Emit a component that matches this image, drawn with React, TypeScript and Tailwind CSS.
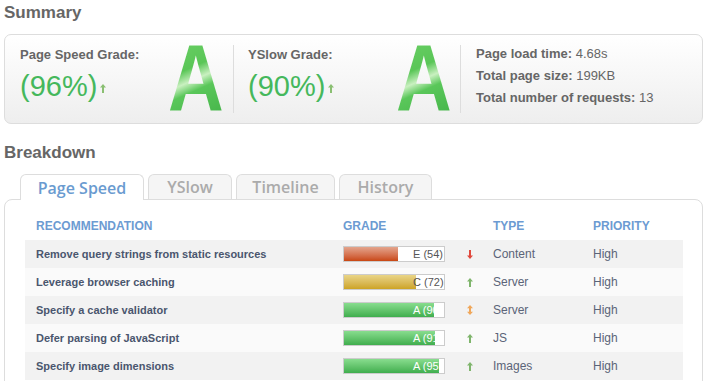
import React from 'react';

type Row = {
  name: string;
  grade: string;
  score: number;
  trend: 'up' | 'down' | 'both';
  type: string;
  priority: string;
};

const rows: Row[] = [
  { name: 'Remove query strings from static resources', grade: 'E', score: 54, trend: 'down', type: 'Content', priority: 'High' },
  { name: 'Leverage browser caching', grade: 'C', score: 72, trend: 'up', type: 'Server', priority: 'High' },
  { name: 'Specify a cache validator', grade: 'A', score: 90, trend: 'both', type: 'Server', priority: 'High' },
  { name: 'Defer parsing of JavaScript', grade: 'A', score: 91, trend: 'up', type: 'JS', priority: 'High' },
  { name: 'Specify image dimensions', grade: 'A', score: 95, trend: 'up', type: 'Images', priority: 'High' },
];

const UpArrow = ({ color = '#7fb56c' }: { color?: string }) => (
  <svg width="6" height="9" viewBox="0 0 6 9" className="inline-block">
    <path d="M3 0 L6 3.5 H4 V9 H2 V3.5 H0 Z" fill={color} />
  </svg>
);

const DownArrow = () => (
  <svg width="6" height="9" viewBox="0 0 6 9" className="inline-block">
    <path d="M3 9 L6 5.5 H4 V0 H2 V5.5 H0 Z" fill="#e0483c" />
  </svg>
);

const BothArrow = () => (
  <svg width="6" height="10" viewBox="0 0 6 10" className="inline-block">
    <path d="M3 0 L6 3.2 H4 V6.8 H6 L3 10 L0 6.8 H2 V3.2 H0 Z" fill="#f0a75a" />
  </svg>
);

const BigA = () => (
  <span className="inline-block w-[56px] text-center">
    <span className="inline-block scale-x-[0.82] font-['Liberation_Sans'] text-[94px] font-bold leading-[88px] bg-[linear-gradient(160deg,#6dd067_0%,#5ac657_38%,#c9f0c0_50%,#5ac75a_60%,#41b046_100%)] bg-clip-text text-transparent">
      A
    </span>
  </span>
);

const GradeBar = ({ grade, score }: { grade: string; score: number }) => {
  const fill =
    grade === 'E'
      ? 'bg-gradient-to-b from-[#e3a48c] to-[#c8460e]'
      : grade === 'C'
        ? 'bg-gradient-to-b from-[#e9d586] to-[#cda421]'
        : 'bg-gradient-to-b from-[#88dd8e] to-[#3fae4e]';
  const label = `${grade} (${score})`;
  const isA = grade === 'A';
  return (
    <div className="relative h-[16px] w-[102px] border border-[#cccccc] bg-white">
      <div className={`relative h-full overflow-hidden ${fill}`} style={{ width: score }}>
        {isA && (
          <span className="absolute left-[69px] top-0 whitespace-nowrap text-[11px] leading-[14px] text-white">
            {label}
          </span>
        )}
      </div>
      {!isA && (
        <span className="absolute left-[69px] top-0 whitespace-nowrap text-[11px] leading-[14px] text-[#555]">
          {label}
        </span>
      )}
    </div>
  );
};

export default function App() {
  return (
    <div className="h-[381px] w-[712px] overflow-hidden bg-white font-['Liberation_Sans',Arial,sans-serif]">
      <h2 className="pl-[4px] pt-[2px] text-[17px] font-bold leading-[22px] text-[#666]">Summary</h2>

      {/* Summary */}
      <div className="ml-[4px] mt-[10px] flex h-[90px] w-[699px] rounded-[7px] border border-[#dddddd] bg-gradient-to-b from-white to-[#eeeeee]">
        <div className="flex w-[228px] justify-between pl-[15px] pr-[15px]">
          <div className="pt-[12px]">
            <div className="text-[13px] font-bold leading-[16px] text-[#666]">Page Speed Grade:</div>
            <div className="mt-[7px] text-[29px] leading-[32px] text-[#45b85c]">
              (96%)<span className="ml-[3px]"><UpArrow color="#8abf72" /></span>
            </div>
          </div>
          <BigA />
        </div>
        <div className="h-[68px] w-px self-center bg-[#dddddd]" />
        <div className="flex w-[226px] justify-between pl-[14px] pr-[14px]">
          <div className="pt-[12px]">
            <div className="text-[13px] font-bold leading-[16px] text-[#666]">YSlow Grade:</div>
            <div className="mt-[7px] text-[29px] leading-[32px] text-[#45b85c]">
              (90%)<span className="ml-[3px]"><UpArrow color="#8abf72" /></span>
            </div>
          </div>
          <BigA />
        </div>
        <div className="h-[68px] w-px self-center bg-[#dddddd]" />
        <div className="flex-1 pl-[15px] pt-[8px] text-[13px] leading-[22px] text-[#666]">
          <div><span className="font-bold">Page load time:</span> 4.68s</div>
          <div><span className="font-bold">Total page size:</span> 199KB</div>
          <div><span className="font-bold">Total number of requests:</span> 13</div>
        </div>
      </div>

      <h2 className="mt-[18px] pl-[4px] text-[17px] font-bold leading-[22px] text-[#666]">Breakdown</h2>

      {/* Tabs */}
      <div className="ml-[20px] mt-[10px] flex h-[25px] items-start gap-[4px] font-['Open_Sans',sans-serif] text-[16px] font-semibold">
        <div className="relative z-10 flex h-[26px] w-[124px] items-center justify-center rounded-t-[6px] border border-b-0 border-[#dddddd] bg-white text-[#6a9bd0]">
          Page Speed
        </div>
        <div className="flex h-[25px] w-[84px] items-center justify-center rounded-t-[6px] border border-b-0 border-[#dddddd] bg-[#f5f5f5] text-[#ababab]">
          YSlow
        </div>
        <div className="flex h-[25px] w-[99px] items-center justify-center rounded-t-[6px] border border-b-0 border-[#dddddd] bg-[#f5f5f5] text-[#ababab]">
          Timeline
        </div>
        <div className="flex h-[25px] w-[93px] items-center justify-center rounded-t-[6px] border border-b-0 border-[#dddddd] bg-[#f5f5f5] text-[#ababab]">
          History
        </div>
      </div>

      {/* Panel */}
      <div className="ml-[4px] w-[699px] rounded-[8px] border border-[#dddddd] bg-white pl-[20px] pr-[19px] pb-[10px]">
        <div className="grid h-[40px] grid-cols-[307px_119px_31px_100px_1fr] pl-[11px] pt-[19px] text-[12px] font-bold leading-[14px] text-[#6c9bd2]">
          <div>RECOMMENDATION</div>
          <div>GRADE</div>
          <div />
          <div>TYPE</div>
          <div>PRIORITY</div>
        </div>
        {rows.map((r, i) => (
          <div
            key={r.name}
            className={`grid h-[28px] grid-cols-[307px_119px_31px_100px_1fr] items-center pl-[11px] ${i % 2 === 0 ? 'bg-[#f2f2f2]' : 'bg-[#fafafa]'}`}
          >
            <div className="text-[11px] font-bold text-[#4a566e]">{r.name}</div>
            <div><GradeBar grade={r.grade} score={r.score} /></div>
            <div className="flex pl-[5px]">
              {r.trend === 'up' ? <UpArrow /> : r.trend === 'down' ? <DownArrow /> : <BothArrow />}
            </div>
            <div className="text-[12px] text-[#5b6478]">{r.type}</div>
            <div className="text-[12px] text-[#5b6478]">{r.priority}</div>
          </div>
        ))}
      </div>
    </div>
  );
}
